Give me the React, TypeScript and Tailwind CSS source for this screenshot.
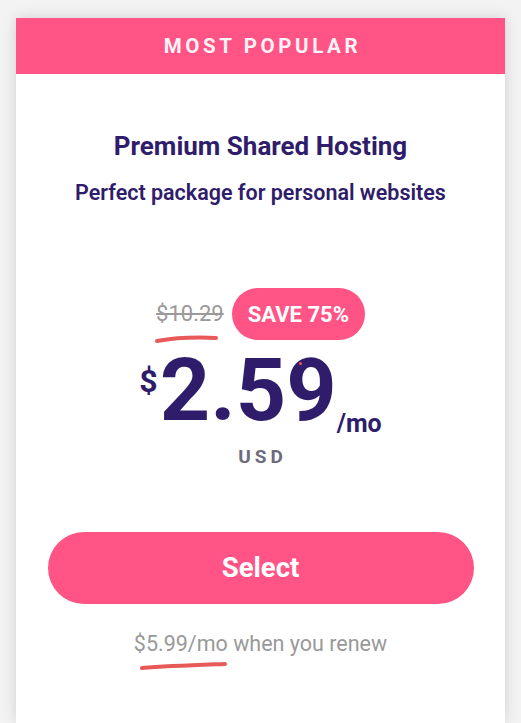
export default function App() {
  return (
    <div className="min-h-[723px] bg-[#f3f3f3] px-4 pt-[18px] font-['Roboto',sans-serif]">
      <div className="bg-white shadow-[0_0_14px_rgba(0,0,0,0.14)] min-h-[705px]">
        {/* banner */}
        <div className="h-14 bg-[#ff5485] flex items-center justify-center">
          <span className="text-[20.5px] font-bold tracking-[3.6px] text-[#fff3f7] leading-none pl-1">MOST POPULAR</span>
        </div>

        <div className="flex flex-col items-center">
          <h2 className="mt-[57px] text-[26px] leading-[30px] font-bold text-[#2f1c6a]">Premium Shared Hosting</h2>
          <p className="mt-[18px] text-[21.5px] leading-[28px] font-semibold text-[#2f1c6a]">
            Perfect package for personal websites
          </p>

          {/* old price + badge */}
          <div className="mt-[81px] flex items-center gap-2">
            <div className="relative">
              <span className="text-[22px] leading-[26px] text-[#9a9a9a] line-through">$10.29</span>
              <svg className="absolute left-[-2px] top-[33px]" width="66" height="10" viewBox="0 0 66 10">
                <path d="M3 7 C 20 4, 40 3, 62 4" stroke="#e85a5a" strokeWidth="4" strokeLinecap="round" fill="none" />
              </svg>
            </div>
            <div className="h-[52px] px-4 rounded-full bg-[#ff5485] flex items-center">
              <span className="text-[22px] font-bold text-white">SAVE 75%</span>
            </div>
          </div>

          {/* price */}
          <div className="mt-[6px] flex items-start text-[#2f1c6a] font-bold">
            <span className="mt-[19px] text-[32px] leading-none">$</span>
            <span className="relative text-[88px] leading-none ml-[2px]">
              2.59
              <span className="absolute left-[139px] top-[16px] w-[3px] h-[3px] rounded-full bg-[#e85a5a]" />
            </span>
            <span className="mt-[65px] text-[25px] leading-none">/mo</span>
          </div>
          <div className="mt-[11px] text-[19px] leading-[20px] font-bold tracking-[4px] text-[#6c6b7d] pl-1">USD</div>

          {/* select */}
          <button className="mt-[65px] w-[426px] h-[72px] rounded-full bg-[#ff5485] text-white text-[27.5px] font-bold">
            Select
          </button>

          <div className="relative mt-[26px]">
            <p className="text-[21.5px] leading-[28px] text-[#999999]">$5.99/mo when you renew</p>
            <svg className="absolute left-[5px] top-[31px]" width="90" height="10" viewBox="0 0 90 10">
              <path d="M3 7 C 30 5, 60 4, 86 3" stroke="#e85a5a" strokeWidth="4" strokeLinecap="round" fill="none" />
            </svg>
          </div>
        </div>
      </div>
    </div>
  );
}
